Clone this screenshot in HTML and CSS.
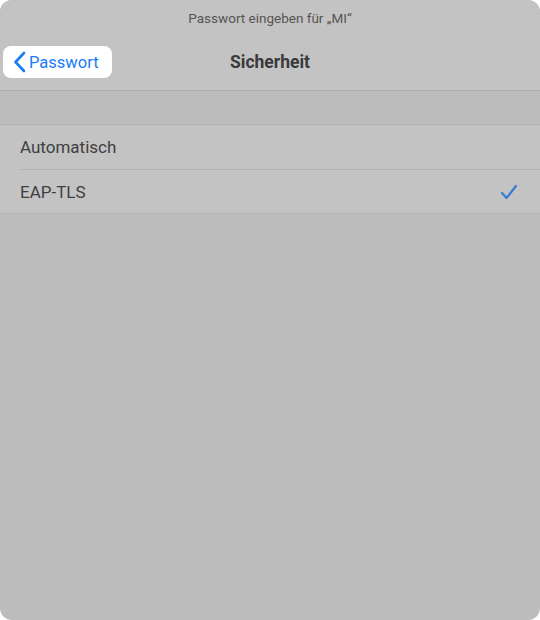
FILE: index.html
```html
<!DOCTYPE html>
<html lang="de">
<head>
    <meta charset="UTF-8">
    <meta name="viewport" content="width=device-width, initial-scale=1.0">
    <title>Sicherheit</title>
    <link rel="stylesheet" href="styles.css">
</head>
<body>
    <div class="sheet">
        <div class="prompt">Passwort eingeben für „MI“</div>

        <div class="nav-bar">
            <button class="back-btn">
                <svg class="chevron" width="13" height="22" viewBox="0 0 13 22">
                    <path d="M11 2 L2.5 11 L11 20" fill="none" stroke="#1a7cf5" stroke-width="2.6" stroke-linecap="round" stroke-linejoin="round"/>
                </svg>
                <span>Passwort</span>
            </button>
            <div class="nav-title">Sicherheit</div>
        </div>

        <div class="section-gap"></div>

        <div class="list">
            <div class="list-row">
                <span class="row-label">Automatisch</span>
            </div>
            <div class="list-row selected">
                <span class="row-label">EAP-TLS</span>
                <svg class="check" width="18" height="16" viewBox="0 0 18 16">
                    <path d="M2 9 L6.5 14 L16 2" fill="none" stroke="#3b7bd3" stroke-width="2.2" stroke-linecap="round" stroke-linejoin="round"/>
                </svg>
            </div>
        </div>
    </div>
</body>
</html>
```

FILE: styles.css
```css
* { margin: 0; padding: 0; box-sizing: border-box; }

html, body {
    height: 100%;
    background: #ffffff;
}

body {
    font-family: 'Roboto', 'Liberation Sans', sans-serif;
    color: #3a3a3a;
}

.sheet {
    height: 620px;
    background: #bcbcbc;
    border-radius: 12px;
    overflow: hidden;
    display: flex;
    flex-direction: column;
}

.prompt {
    background: #c3c3c3;
    height: 36px;
    padding-top: 10px;
    text-align: center;
    font-size: 13.5px;
    color: #555;
}

.nav-bar {
    background: #c3c3c3;
    height: 55px;
    position: relative;
    display: flex;
    align-items: center;
    justify-content: center;
    border-bottom: 1px solid #acacac;
}

.back-btn {
    position: absolute;
    left: 3px;
    top: 10px;
    width: 109px;
    height: 32px;
    background: #ffffff;
    border: none;
    border-radius: 8px;
    display: flex;
    align-items: center;
    gap: 3px;
    padding-left: 10px;
    font-family: inherit;
    font-size: 16.5px;
    color: #1a7cf5;
}

.nav-title {
    font-size: 17.5px;
    font-weight: bold;
    color: #3a3a3a;
    margin-top: -3px;
}

.section-gap {
    height: 34px;
    background: #bcbcbc;
    border-bottom: 1px solid #b0b0b0;
}

.list {
    background: #c3c3c3;
    border-bottom: 1px solid #b3b3b3;
}

.list-row {
    height: 44px;
    margin-left: 20px;
    padding-right: 22px;
    display: flex;
    align-items: center;
    justify-content: space-between;
    font-size: 17px;
    color: #3f3f3f;
}

.list-row + .list-row {
    border-top: 1px solid #b3b3b3;
}
```
